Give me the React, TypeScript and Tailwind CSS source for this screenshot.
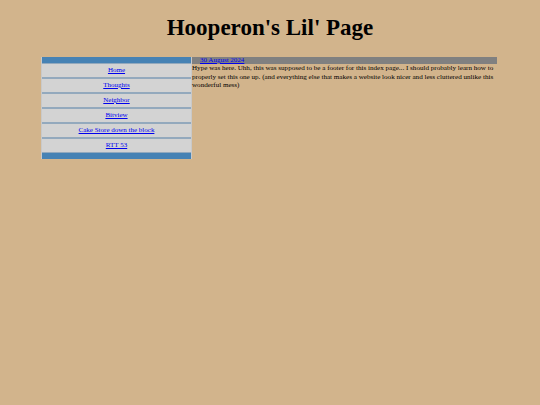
const links = ["Home", "Thoughts", "Neighbor", "Bitview", "Cake Store down the block", "RTT 53"];

export default function App() {
  return (
    <div className="min-h-[405px] w-[540px] bg-[#d2b48c] font-['Liberation_Serif',serif] text-black">
      <h1 className="pt-[14px] text-center text-[23px] font-bold leading-[28px]">Hooperon's Lil' Page</h1>
      <div className="mt-[15px] ml-[41px] flex w-[456px] items-start">
        <div className="w-[151px] border-x border-[#c9c9c9] bg-[#4682b4] py-[6px]">
          {links.map((l) => (
            <div
              key={l}
              className="flex h-[15px] items-center justify-center border-y border-[#93a9bd] bg-[#d3d3d3] text-[7px] leading-none"
            >
              <a href="#" className="text-[#0000ee] underline">
                {l}
              </a>
            </div>
          ))}
        </div>
        <div className="flex-1">
          <div className="h-[7px] bg-[#808080] pl-[8px] text-[7px] leading-[7px]">
            <a href="#" className="text-[#0000ee] underline">
              30 August 2024
            </a>
          </div>
          <p className="text-[7.1px] leading-[8.5px] text-black">
            Hype was here. Uhh, this was supposed to be a footer for this index page... I should probably learn how to
            properly set this one up. (and everything else that makes a website look nicer and less cluttered unlike this
            wonderful mess)
          </p>
        </div>
      </div>
    </div>
  );
}
